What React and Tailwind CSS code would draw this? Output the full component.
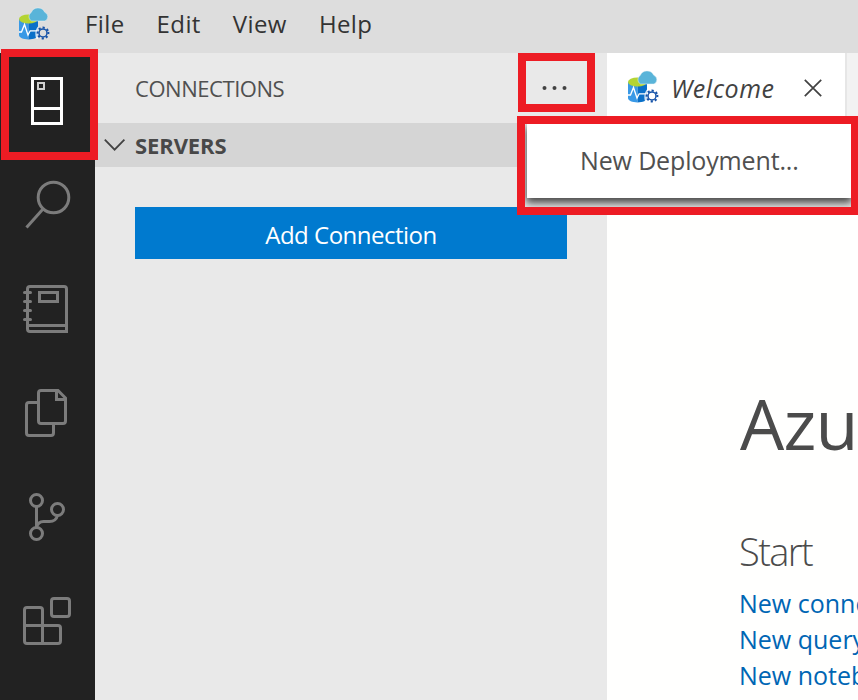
const UI = "font-['Open_Sans','Noto_Sans',sans-serif]";

function AppLogo() {
  return (
    <svg width="31" height="33" viewBox="0 0 31 33" className="block shrink-0">
      <path d="M0 12v16c0 2.500 4.200 4.400 9.500 4.400V12z" fill="#3999e6" />
      <path d="M9.500 12v20.400c5.300 0 9.500-1.900 9.500-4.400V12z" fill="#0a70c9" />
      <ellipse cx="9.500" cy="12" rx="9.500" ry="4.600" fill="#b4d433" />
      <path d="M12.500 14a5 5 0 0 1-.3-8.500A7.400 7.400 0 0 1 25.800 5.300 4.700 4.700 0 0 1 26 14z" fill="#59b4d9" stroke="#e8f2f5" strokeWidth=".5" />
      <path d="M0 25h2.500l3-7.500 3.500 10.500 2.200-4.200H18" fill="none" stroke="#fff" strokeWidth="1.300" />
      <path d="M19 19.500v12.500h-1.500c-1.500-2-2-9 1.500-12.500z" fill="#fff" fillOpacity=".8" />
      <circle cx="24" cy="26" r="5.400" fill="none" stroke="#1552a8" strokeWidth="2" strokeDasharray="2.120 2.120" transform="rotate(-11 24 26)" />
      <circle cx="24" cy="26" r="4" fill="none" stroke="#1552a8" strokeWidth="1.500" />
    </svg>
  );
}

function ActivityIcon({ children, active }) {
  return (
    <div className={`h-[104px] w-[95px] ${active ? "text-white" : "text-[#7c7c7c]"}`}>
      <svg width="95" height="104" viewBox="0 0 95 104" fill="none" stroke="currentColor" strokeWidth="3" className="block">
        {children}
      </svg>
    </div>
  );
}

function ActivityBar() {
  return (
    <nav className="flex w-[95px] shrink-0 flex-col bg-[#222222]">
      <ActivityIcon active>
        <path d="M32.500 25.500h29v45h-29zM32.500 55.500h29" />
        <path d="M38 30h6v6h-6z" strokeWidth="2" stroke="#cfcfcf" />
      </ActivityIcon>
      <ActivityIcon>
        <circle cx="53.500" cy="40.500" r="15.300" />
        <path d="M43 52L26.500 70.500" />
      </ActivityIcon>
      <ActivityIcon>
        <path d="M66.500 73.500H30a2.500 2.500 0 0 1-2.500-2.500V31a2.500 2.500 0 0 1 2.500-2.500h34a2.500 2.500 0 0 1 2.500 2.500zM28 67.500h38M39.500 34.500h18v9h-18z" transform="translate(0 -3)" />
        <path d="M24.500 31.500h6M24.500 40.500h6M24.500 49.500h6M24.500 58.500h6" strokeLinecap="round" />
      </ActivityIcon>
      <ActivityIcon>
        <path d="M38.500 37.500H29a2.500 2.500 0 0 0-2.500 2.500v28a2.500 2.500 0 0 0 2.500 2.500h22a2.500 2.500 0 0 0 2.500-2.500v-9M41 25.500h17l7.500 7.500v23a2.500 2.500 0 0 1-2.500 2.500H41a2.500 2.500 0 0 1-2.500-2.500V28a2.500 2.500 0 0 1 2.500-2.500zM56.500 26v8.500h9" />
      </ActivityIcon>
      <ActivityIcon>
        <circle cx="36.500" cy="31.500" r="6" />
        <circle cx="57.500" cy="40.500" r="6" />
        <circle cx="36.500" cy="64.500" r="6" />
        <path d="M36.500 37.500v21M36.500 58.500c1-4 3-6 7-6h6c4 0 7-2 8-6" />
      </ActivityIcon>
      <ActivityIcon>
        <rect x="51.500" y="25.500" width="18" height="18" rx="2.500" />
        <path d="M27 34.500h13a2.500 2.500 0 0 1 2.500 2.500v33.500H27a2.500 2.500 0 0 1-2.500-2.500V37a2.500 2.500 0 0 1 2.500-2.500zM24.500 52.500h33.500a2.500 2.500 0 0 1 2.500 2.500v13a2.500 2.500 0 0 1-2.500 2.500H42" />
      </ActivityIcon>
    </nav>
  );
}

function Sidebar() {
  return (
    <aside className="w-[512px] shrink-0 bg-[#e9e9e9]">
      <div className="flex h-[70px] items-center justify-between pr-[38px] pl-[40px]">
        <h2 className="text-[22px] leading-[30px] tracking-[-0.45px] text-[#505050]">CONNECTIONS</h2>
        <svg width="27" height="6" viewBox="0 0 27 6" fill="#424242">
          <circle cx="2.500" cy="3" r="2" />
          <circle cx="12.500" cy="3" r="2" />
          <circle cx="22.500" cy="3" r="2" />
        </svg>
      </div>
      <div className="flex h-[44px] items-center bg-[#d5d5d5] pl-[9px]">
        <svg width="22" height="14" viewBox="0 0 22 14" fill="none" stroke="#424242" strokeWidth="1.800" className="mr-[9px]">
          <path d="M.8 1.700L10.600 11.700L20.400 1.700" />
        </svg>
        <h3 className="text-[22px] leading-[30px] font-bold tracking-[-0.1px] text-[#484848]">SERVERS</h3>
      </div>
      <button className="mt-[40px] ml-[40px] flex h-[52px] w-[432px] items-center justify-center bg-[#007acf] pt-[3px] text-[24px] leading-[32px] tracking-[-0.5px] text-white">
        Add Connection
      </button>
    </aside>
  );
}

function Editor() {
  return (
    <main className="min-w-0 flex-1 overflow-hidden bg-[#fffffe]">
      <div className="flex h-[70px] bg-[#f2f2f2]">
        <div className="flex w-[240px] shrink-0 items-center border-r-2 border-[#e6e6e6] bg-white pl-[21px]">
          <div className="pb-[3px]">
            <AppLogo />
          </div>
          <span className="ml-[12px] w-[105px] text-[25px] leading-[32px] tracking-[0.55px] whitespace-nowrap text-[#424242] italic">Welcome</span>
          <svg width="18" height="18" viewBox="0 0 18 18" fill="none" stroke="#424242" strokeWidth="1.700" className="ml-[28px]">
            <path d="M.8 .8l16.400 16.400M17.200 .8L.8 17.200" />
          </svg>
        </div>
      </div>
      <div className="pt-[250px] pl-[133px] whitespace-nowrap">
        <h1 className="text-[70px] leading-[100px] tracking-[-0.8px] text-[#4b4b4b]">Azure Data Studio</h1>
        <h2 className="mt-[52px] -ml-px text-[38px] leading-[52px] font-light tracking-[-1.6px] text-[#4b4b4b]">Start</h2>
        <div className="mt-[8px] -ml-px flex flex-col text-[25px] leading-[36px] text-[#0066b4]">
          <a>New connection</a>
          <a>New query</a>
          <a>New notebook</a>
        </div>
      </div>
    </main>
  );
}

export default function App() {
  return (
    <div className={`relative flex h-[700px] w-[858px] flex-col overflow-hidden bg-[#e9e9e9] ${UI}`}>
      <header className="flex h-[53px] shrink-0 items-center bg-[#dddddd] pb-[6px] pl-[19px] text-[24px] leading-[32px] text-[#333333]">
        <AppLogo />
        <div className="ml-[35px] flex gap-[32px] pt-px tracking-[0.4px]">
          <span>File</span>
          <span>Edit</span>
          <span>View</span>
          <span>Help</span>
        </div>
      </header>
      <div className="flex min-h-0 flex-1">
        <ActivityBar />
        <Sidebar />
        <Editor />
      </div>

      <div className="absolute top-[116px] left-[517px] flex h-[99px] w-[342px] items-start overflow-hidden border-8 border-[#ed1c24] bg-[#e9e9e9]">
        <div className="ml-[2px] flex h-[74px] w-[324px] items-center bg-white pl-[53px] text-[25px] tracking-[-0.15px] text-[#505050] shadow-[0_4px_8px_1px_rgba(0,0,0,0.7)]">
          New Deployment...
        </div>
      </div>
      <div className="absolute top-[53px] left-[518px] h-[59px] w-[77px] border-8 border-[#ed1c24]" />
      <div className="absolute top-[49px] left-px h-[111px] w-[97px] border-8 border-[#ed1c24]" />
    </div>
  );
}
